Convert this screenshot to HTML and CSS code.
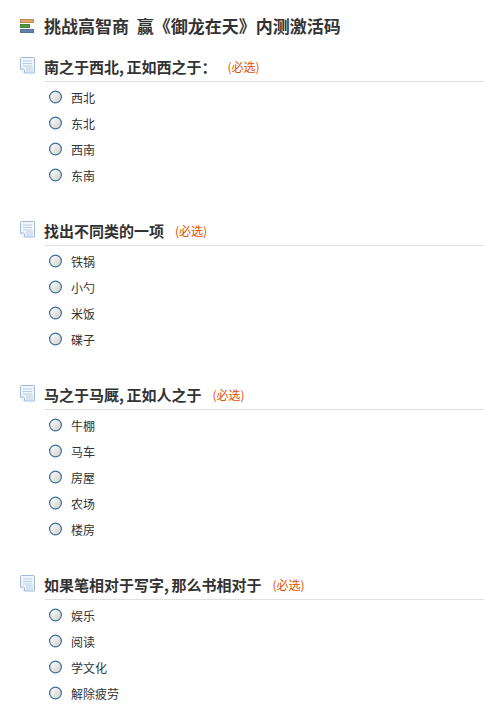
FILE: index.html
```html
<!DOCTYPE html>
<html lang="zh-CN">
<head>
<meta charset="utf-8">
<title>挑战高智商</title>
<link rel="stylesheet" href="styles.css">
</head>
<body>
<svg class="defs" width="0" height="0" aria-hidden="true">
  <defs>
    <linearGradient id="radioFill" x1="0" y1="0" x2="1" y2="1">
      <stop offset="0" stop-color="#ffffff"/>
      <stop offset="1" stop-color="#cfcfc6"/>
    </linearGradient>
    <symbol id="radio" viewBox="0 0 14 14">
      <circle cx="7" cy="7" r="5.900" fill="url(#radioFill)" stroke="#3f6f9c" stroke-width="1.200"/>
    </symbol>
    <symbol id="doc" viewBox="0 0 15 17">
      <path d="M1.500.5h12a1 1 0 0 1 1 1v14.500h-10l-4-4V1.500a1 1 0 0 1 1-1z" fill="#f2f6fb" stroke="#9db9dc"/>
      <path d="M3 4h9M3 6.500h9M3 9h9" stroke="#b9cde4" fill="none"/>
      <path d="M6 10h7v5H6z" fill="#d5e2f0"/>
      <path d="M.5 12h2.500a1.500 1.500 0 0 1 1.500 1.500V16" fill="#ffffff" stroke="#9db9dc"/>
    </symbol>
  </defs>
</svg>
<main class="survey">
  <h1 class="title">
    <svg class="title-icon" width="14" height="14" viewBox="0 0 14 14" aria-hidden="true">
      <rect x=".5" y=".5" width="13" height="3" fill="#e4a768" stroke="#b98a52"/>
      <rect x=".5" y="5.500" width="9" height="3" fill="#4f9a3b" stroke="#47803a"/>
      <rect x=".5" y="10.500" width="13" height="3" fill="#6683ad" stroke="#55709a"/>
    </svg>
    <span>挑战高智商&nbsp;&nbsp;赢《御龙在天》内测激活码</span>
  </h1>

  <section class="question">
    <h2 class="q-head">
      <svg class="doc-icon" width="15" height="17" aria-hidden="true"><use href="#doc"/></svg>
      <span class="q-text">南之于西北<span class="comma">,</span>正如西之于：</span><span class="req">(必选)</span>
    </h2>
    <ul class="options">
      <li><svg class="radio" width="14" height="14" aria-hidden="true"><use href="#radio"/></svg>西北</li>
      <li><svg class="radio" width="14" height="14" aria-hidden="true"><use href="#radio"/></svg>东北</li>
      <li><svg class="radio" width="14" height="14" aria-hidden="true"><use href="#radio"/></svg>西南</li>
      <li><svg class="radio" width="14" height="14" aria-hidden="true"><use href="#radio"/></svg>东南</li>
    </ul>
  </section>

  <section class="question">
    <h2 class="q-head">
      <svg class="doc-icon" width="15" height="17" aria-hidden="true"><use href="#doc"/></svg>
      <span class="q-text">找出不同类的一项</span><span class="req">(必选)</span>
    </h2>
    <ul class="options">
      <li><svg class="radio" width="14" height="14" aria-hidden="true"><use href="#radio"/></svg>铁锅</li>
      <li><svg class="radio" width="14" height="14" aria-hidden="true"><use href="#radio"/></svg>小勺</li>
      <li><svg class="radio" width="14" height="14" aria-hidden="true"><use href="#radio"/></svg>米饭</li>
      <li><svg class="radio" width="14" height="14" aria-hidden="true"><use href="#radio"/></svg>碟子</li>
    </ul>
  </section>

  <section class="question">
    <h2 class="q-head">
      <svg class="doc-icon" width="15" height="17" aria-hidden="true"><use href="#doc"/></svg>
      <span class="q-text">马之于马厩<span class="comma">,</span>正如人之于</span><span class="req">(必选)</span>
    </h2>
    <ul class="options">
      <li><svg class="radio" width="14" height="14" aria-hidden="true"><use href="#radio"/></svg>牛棚</li>
      <li><svg class="radio" width="14" height="14" aria-hidden="true"><use href="#radio"/></svg>马车</li>
      <li><svg class="radio" width="14" height="14" aria-hidden="true"><use href="#radio"/></svg>房屋</li>
      <li><svg class="radio" width="14" height="14" aria-hidden="true"><use href="#radio"/></svg>农场</li>
      <li><svg class="radio" width="14" height="14" aria-hidden="true"><use href="#radio"/></svg>楼房</li>
    </ul>
  </section>

  <section class="question">
    <h2 class="q-head">
      <svg class="doc-icon" width="15" height="17" aria-hidden="true"><use href="#doc"/></svg>
      <span class="q-text">如果笔相对于写字<span class="comma">,</span>那么书相对于</span><span class="req">(必选)</span>
    </h2>
    <ul class="options">
      <li><svg class="radio" width="14" height="14" aria-hidden="true"><use href="#radio"/></svg>娱乐</li>
      <li><svg class="radio" width="14" height="14" aria-hidden="true"><use href="#radio"/></svg>阅读</li>
      <li><svg class="radio" width="14" height="14" aria-hidden="true"><use href="#radio"/></svg>学文化</li>
      <li><svg class="radio" width="14" height="14" aria-hidden="true"><use href="#radio"/></svg>解除疲劳</li>
    </ul>
  </section>
</main>
</body>
</html>
```
FILE: styles.css
```css
* { box-sizing: border-box; }
html, body { margin: 0; padding: 0; background: #fff; }
body {
  width: 484px;
  height: 728px;
  overflow: hidden;
  color: #333;
  font-family: "Noto Sans CJK SC", "Liberation Sans", sans-serif;
}
.defs { position: absolute; }
.survey { padding: 14px 0 0 20px; }
.title {
  display: flex;
  align-items: center;
  gap: 10px;
  margin: 0 0 14px;
  height: 24px;
  font-size: 17px;
  line-height: 24px;
  font-weight: 700;
  white-space: nowrap;
}
.title-icon { flex: none; }
.question { margin-bottom: 27px; }
.q-head {
  display: flex;
  align-items: center;
  margin: 0 0 3px;
  height: 30px;
  padding-bottom: 1px;
  font-size: 15px;
  font-weight: 700;
  white-space: nowrap;
  position: relative;
}
.doc-icon { flex: none; margin: -3px 9px 0 0; }
.q-text { line-height: 29px; }
.comma { display: inline-block; width: 7.5px; }
.q-head::after {
  content: "";
  position: absolute;
  left: 25px;
  right: 0;
  bottom: 0;
  border-bottom: 1px solid #e0e0e0;
}
.req {
  margin-left: 11px;
  color: #e25000;
  font-size: 12px;
  font-weight: 400;
}
.options {
  list-style: none;
  margin: 0;
  padding: 0 0 0 29px;
}
.options li {
  display: flex;
  align-items: center;
  gap: 8px;
  height: 26px;
  font-size: 12px;
  line-height: 24px;
  color: #333;
}
.radio { flex: none; margin: -3px 0 0 -1px; width: 15px; }
```
